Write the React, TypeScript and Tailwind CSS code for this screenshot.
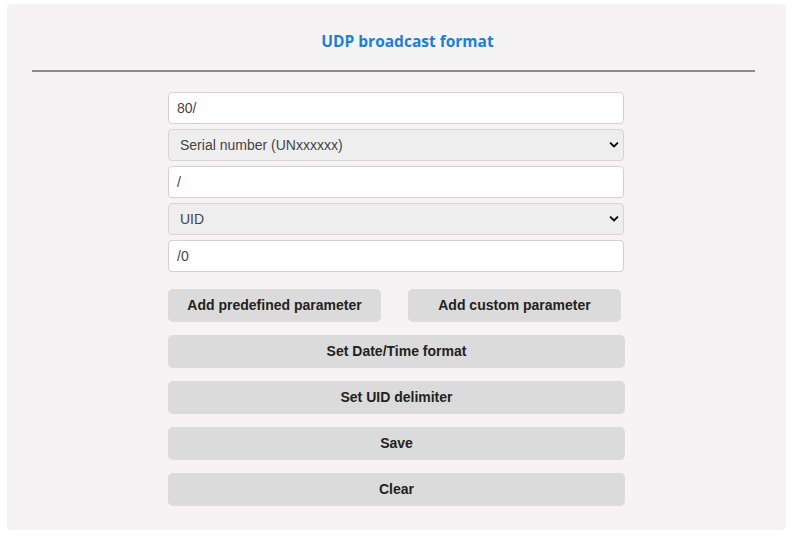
import React from "react";

function Chevron() {
  return (
    <svg width="10" height="7" viewBox="0 0 10 7" className="absolute right-[5px] top-1/2 -translate-y-1/2 pointer-events-none">
      <path d="M1.6 1.6 L5 5 L8.4 1.6" fill="none" stroke="#111" strokeWidth="1.9" strokeLinecap="round" strokeLinejoin="round" />
    </svg>
  );
}

function TextInput({ value }: { value: string }) {
  return (
    <input
      readOnly
      value={value}
      className="h-[32px] w-full rounded-[4px] border border-[#d2d0d0] bg-white px-[8px] text-[14px] text-[#444] outline-none [font-family:'Liberation_Sans',Arial,sans-serif]"
    />
  );
}

function Select({ value }: { value: string }) {
  return (
    <div className="relative h-[32px] w-full">
      <select
        value={value}
        onChange={() => {}}
        className="h-full w-full appearance-none rounded-[4px] border border-[#d6d4d4] bg-[#efeeee] pl-[11px] text-[14px] text-[#444] outline-none [font-family:'Liberation_Sans',Arial,sans-serif]"
      >
        <option>{value}</option>
      </select>
      <Chevron />
    </div>
  );
}

function Btn({ label, className = "" }: { label: string; className?: string }) {
  return (
    <button className={`h-[33px] rounded-[5px] bg-[#dcdbdb] text-[14px] font-bold text-[#222] [font-family:'Liberation_Sans',Arial,sans-serif] ${className}`}>
      {label}
    </button>
  );
}

export default function App() {
  return (
    <div className="min-h-[536px] bg-white pt-[4px] pl-[7px]">
      <div className="flex h-[526px] w-[779px] flex-col rounded-[4px] bg-[#f5f3f3]">
        <div className="flex justify-center pt-[25px] pl-[22px]">
          <h1 className="text-[15.5px] leading-[24px] font-bold text-[#1a80d6] [font-family:'Open_Sans',sans-serif]">
            UDP broadcast format
          </h1>
        </div>
        <div className="mt-[17px] ml-[25px] h-[2px] w-[723px] bg-[#8a8a8a]" />
        <div className="mt-[20px] ml-[161px] flex w-[457px] flex-col">
          <div className="flex flex-col gap-[5px] pr-[1px]">
            <TextInput value="80/" />
            <Select value="Serial number (UNxxxxxx)" />
            <TextInput value="/" />
            <Select value="UID" />
            <TextInput value="/0" />
          </div>
          <div className="mt-[17px] flex flex-col gap-[13px]">
            <div className="flex gap-[27px]">
              <Btn label="Add predefined parameter" className="w-[213px]" />
              <Btn label="Add custom parameter" className="w-[213px]" />
            </div>
            <Btn label="Set Date/Time format" className="w-full" />
            <Btn label="Set UID delimiter" className="w-full" />
            <Btn label="Save" className="w-full" />
            <Btn label="Clear" className="w-full" />
          </div>
        </div>
      </div>
    </div>
  );
}
